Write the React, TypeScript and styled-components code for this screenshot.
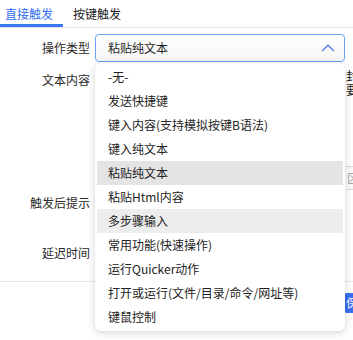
import React from "react";
import styled, { createGlobalStyle } from "styled-components";

const GlobalStyle = createGlobalStyle`
  html, body {
    margin: 0;
    padding: 0;
    background: #fff;
    overflow: hidden;
  }
  body {
    font-family: "Noto Sans CJK SC", "Noto Sans", sans-serif;
    font-size: 12px;
    color: #222;
  }
`;

const OPTIONS = [
  "-无-",
  "发送快捷键",
  "键入内容(支持模拟按键B语法)",
  "键入纯文本",
  "粘贴纯文本",
  "粘贴Html内容",
  "多步骤输入",
  "常用功能(快速操作)",
  "运行Quicker动作",
  "打开或运行(文件/目录/命令/网址等)",
  "键鼠控制",
];

const SELECTED = "粘贴纯文本";
const HOVERED = "多步骤输入";

const Page = styled.div`
  width: 353px;
  height: 340px;
  overflow: hidden;
`;

const TabBar = styled.div`
  display: flex;
  height: 27px;
  border-bottom: 1px solid #e3e3e3;
`;

const Tab = styled.div<{ $active?: boolean; $first?: boolean }>`
  box-sizing: border-box;
  height: 27px;
  padding: 0 10px 0 ${(p) => (p.$first ? "5px" : "10px")};
  line-height: 27px;
  font-size: 12px;
  color: ${(p) => (p.$active ? "#2f6ef2" : "#1a1a1a")};
  border-bottom: 3px solid ${(p) => (p.$active ? "#3b78f5" : "transparent")};
`;

const Form = styled.div`
  padding-top: 6px;
`;

const Row = styled.div<{ $top?: number; $height: number }>`
  display: grid;
  grid-template-columns: 95px 250px 1fr;
  height: ${(p) => p.$height}px;
  margin-top: ${(p) => p.$top ?? 0}px;
`;

const Label = styled.div<{ $lh?: number }>`
  box-sizing: border-box;
  padding-right: 5px;
  text-align: right;
  line-height: ${(p) => p.$lh ?? 28}px;
  color: #2a2a2a;
  white-space: nowrap;
`;

const Field = styled.div`
  position: relative;
`;

const SelectBox = styled.div`
  box-sizing: border-box;
  display: flex;
  align-items: center;
  justify-content: space-between;
  height: 28px;
  padding: 0 9px 0 12px;
  border: 1px solid #6f9cf6;
  border-radius: 4px;
  background: linear-gradient(#ffffff, #f6f6f6);
  line-height: 26px;
  color: #1f1f1f;
`;

const Menu = styled.div`
  position: absolute;
  top: 29px;
  left: 0;
  z-index: 10;
  box-sizing: border-box;
  width: 250px;
  padding: 2px;
  background: #fff;
  border-radius: 6px;
  box-shadow: 0 2px 8px rgba(0, 0, 0, 0.16), 0 0 1px rgba(0, 0, 0, 0.12);
`;

const MenuItem = styled.div<{ $state?: "selected" | "hover" }>`
  height: 24px;
  padding-left: 11px;
  line-height: 24px;
  color: #222;
  white-space: nowrap;
  background: ${(p) =>
    p.$state === "selected" ? "#e4e4e4" : p.$state === "hover" ? "#ededed" : "transparent"};
`;

const SideNote = styled.div`
  padding: 3px 0 0 1px;
  line-height: 14px;
  color: #1a1a1a;
  white-space: nowrap;
`;

const SideInput = styled.div`
  box-sizing: border-box;
  height: 24px;
  margin-left: 1px;
  padding-left: 1px;
  border-top: 1px solid #dcdcdc;
  border-bottom: 1px solid #dcdcdc;
  background: #fafafa;
  color: #a8a8a8;
  line-height: 22px;
  white-space: nowrap;
`;

const Divider = styled.div`
  margin-top: 14px;
  border-top: 1px solid #e6e6e6;
`;

const Footer = styled.div`
  display: flex;
  padding: 11px 0 0 344px;
`;

const SaveButton = styled.div`
  flex: none;
  width: 60px;
  height: 20px;
  padding-left: 2px;
  background: #3a6ff0;
  color: #fff;
  line-height: 20px;
  border-radius: 3px;
`;

const ChevronUp = () => (
  <svg width="14" height="8" viewBox="0 0 14 8" fill="none">
    <path d="M1 7L7 1.3L13 7" stroke="#4a80f2" strokeWidth="1.4" />
  </svg>
);

export default function App() {
  return (
    <Page>
      <GlobalStyle />
      <TabBar>
        <Tab $active $first>
          直接触发
        </Tab>
        <Tab>按键触发</Tab>
      </TabBar>
      <Form>
        <Row $height={28}>
          <Label>操作类型</Label>
          <Field>
            <SelectBox>
              <span>{SELECTED}</span>
              <ChevronUp />
            </SelectBox>
            <Menu>
              {OPTIONS.map((opt) => (
                <MenuItem
                  key={opt}
                  $state={opt === SELECTED ? "selected" : opt === HOVERED ? "hover" : undefined}
                >
                  {opt}
                </MenuItem>
              ))}
            </Menu>
          </Field>
        </Row>
        <Row $top={4} $height={96}>
          <Label>文本内容</Label>
          <Field />
          <SideNote>
            封装
            <br />
            要求
          </SideNote>
        </Row>
        <Row $top={4} $height={24}>
          <Label />
          <Field />
          <SideInput>区域</SideInput>
        </Row>
        <Row $height={26}>
          <Label $lh={26}>触发后提示</Label>
          <Field />
        </Row>
        <Row $top={23} $height={28}>
          <Label>延迟时间</Label>
          <Field />
        </Row>
        <Divider />
        <Footer>
          <SaveButton>保存</SaveButton>
        </Footer>
      </Form>
    </Page>
  );
}
